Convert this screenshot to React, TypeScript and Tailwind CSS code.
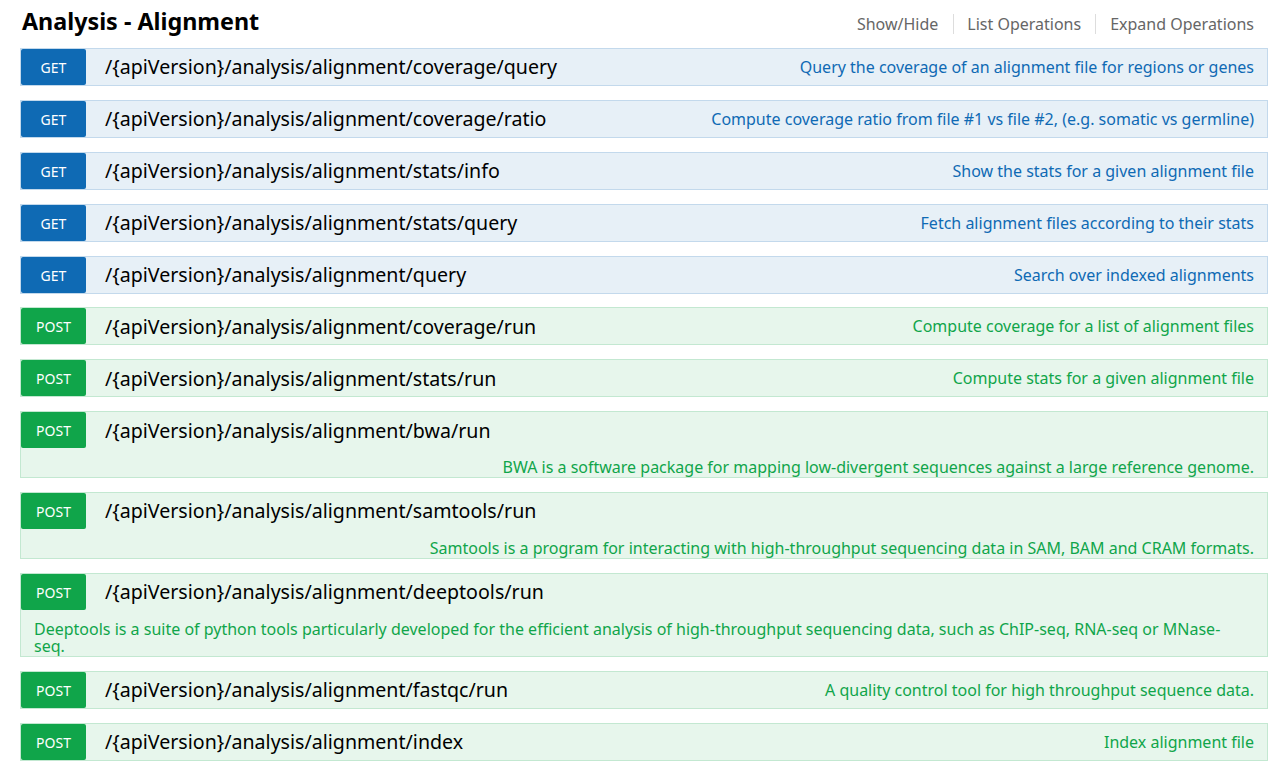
import React from "react";

type Op = {
  method: "GET" | "POST";
  path: string;
  desc: React.ReactNode;
  below?: "right" | "left";
};

const ops: Op[] = [
  { method: "GET", path: "/{apiVersion}/analysis/alignment/coverage/query", desc: "Query the coverage of an alignment file for regions or genes" },
  { method: "GET", path: "/{apiVersion}/analysis/alignment/coverage/ratio", desc: "Compute coverage ratio from file #1 vs file #2, (e.g. somatic vs germline)" },
  { method: "GET", path: "/{apiVersion}/analysis/alignment/stats/info", desc: "Show the stats for a given alignment file" },
  { method: "GET", path: "/{apiVersion}/analysis/alignment/stats/query", desc: "Fetch alignment files according to their stats" },
  { method: "GET", path: "/{apiVersion}/analysis/alignment/query", desc: "Search over indexed alignments" },
  { method: "POST", path: "/{apiVersion}/analysis/alignment/coverage/run", desc: "Compute coverage for a list of alignment files" },
  { method: "POST", path: "/{apiVersion}/analysis/alignment/stats/run", desc: "Compute stats for a given alignment file" },
  { method: "POST", path: "/{apiVersion}/analysis/alignment/bwa/run", desc: "BWA is a software package for mapping low-divergent sequences against a large reference genome.", below: "right" },
  { method: "POST", path: "/{apiVersion}/analysis/alignment/samtools/run", desc: "Samtools is a program for interacting with high-throughput sequencing data in SAM, BAM and CRAM formats.", below: "right" },
  {
    method: "POST",
    path: "/{apiVersion}/analysis/alignment/deeptools/run",
    desc: (
      <>
        Deeptools is a suite of python tools particularly developed for the efficient analysis of high-throughput sequencing data, such as ChIP-seq, RNA-seq or MNase-
        <br />
        seq.
      </>
    ),
    below: "left",
  },
  { method: "POST", path: "/{apiVersion}/analysis/alignment/fastqc/run", desc: "A quality control tool for high throughput sequence data." },
  { method: "POST", path: "/{apiVersion}/analysis/alignment/index", desc: "Index alignment file" },
];

function Row({ op }: { op: Op }) {
  const isGet = op.method === "GET";
  const box = isGet ? "bg-[#e7f0f7] border-[#c3d9ec]" : "bg-[#e7f6ec] border-[#c3e8d1]";
  const badge = isGet ? "bg-[#0f6ab4]" : "bg-[#10a54a]";
  const txt = isGet ? "text-[#0f6ab4]" : "text-[#10a54a]";
  return (
    <div className={`border ${box} mb-[13.9px]`}>
      <div className="flex items-center h-[36px]">
        <div className={`${badge} w-[65px] h-[36px] rounded-[2px] flex items-center justify-center text-white text-[14px] pt-[1px] shrink-0`}>
          {op.method}
        </div>
        <div className="pl-[19px] text-[19.6px] text-black whitespace-nowrap">{op.path}</div>
        {!op.below && (
          <div className={`ml-auto pr-[13px] text-[16px] ${txt} whitespace-nowrap`}>{op.desc}</div>
        )}
      </div>
      {op.below && (
        <div
          className={`pt-[11px] pb-[1px] px-[13px] text-[16px] leading-[17px] ${txt} ${op.below === "right" ? "text-right" : "text-left"}`}
        >
          {op.desc}
        </div>
      )}
    </div>
  );
}

export default function App() {
  return (
    <div className="bg-white min-h-[769px] pl-[20px] pr-[19px]" style={{ fontFamily: '"Noto Sans", "DejaVu Sans", sans-serif' }}>
      <div className="flex items-start h-[48px]">
        <h2 className="pl-[2px] pt-[5px] text-[23.3px] leading-[32px] font-bold text-black">Analysis - Alignment</h2>
        <div className="ml-auto flex items-center mt-[14px] text-[16px] text-[#666] leading-[20px]">
          <span className="pl-[14px] pr-[15px]">Show/Hide</span>
          <span className="pl-[13px] pr-[14px] border-l border-[#ddd]">List Operations</span>
          <span className="pl-[14px] pr-[14px] border-l border-[#ddd]">Expand Operations</span>
        </div>
      </div>
      {ops.map((op, i) => (
        <Row key={i} op={op} />
      ))}
    </div>
  );
}
